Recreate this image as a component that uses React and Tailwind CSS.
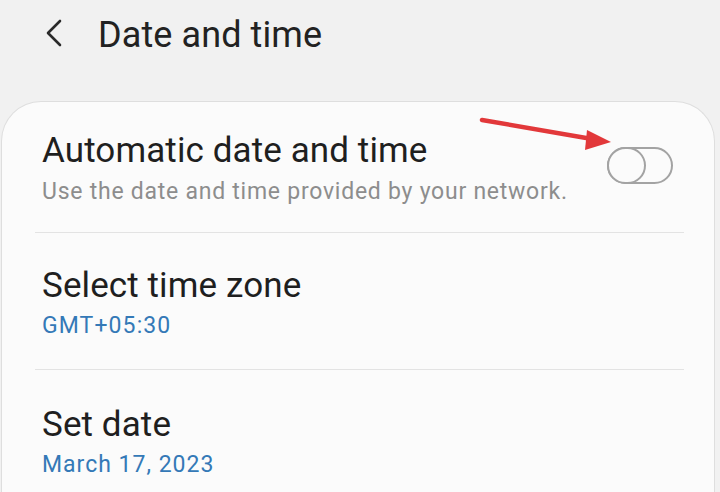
import React from 'react';

const Toggle = () => (
    <div className="relative w-[66px] h-[37px] rounded-full border-2 border-[#a3a3a3] bg-[#fbfbfb]">
        <div className="absolute -left-[2px] -top-[2px] w-[39px] h-[37px] rounded-full border-2 border-[#a3a3a3] bg-[#fbfbfb]" />
    </div>
);

const Row = ({ title, sub, subClass, pt, gap, pb, right, divider }) => (
    <div>
        <div className="flex items-center justify-between pl-[40px] pr-[41px]" style={{ paddingTop: pt, paddingBottom: pb }}>
            <div className="flex flex-col" style={{ gap }}>
                <div className="text-[35px] leading-[42px] text-[#1f1f1f] tracking-[0.1px]">{title}</div>
                <div className={`text-[23px] leading-[28px] ${subClass}`}>{sub}</div>
            </div>
            {right}
        </div>
        {divider && <div className="ml-[33px] mr-[30px] h-px bg-[#e3e3e3]" />}
    </div>
);

const App = () => {
    return (
        <div className="w-[720px] h-[492px] overflow-hidden bg-[#f1f1f1] relative" style={{ fontFamily: 'Roboto, "Liberation Sans", sans-serif' }}>
            <div className="h-[101px] flex items-start pt-[14px] pl-[44px]">
                <svg width="20" height="28" viewBox="0 0 20 28" className="mt-[5px]">
                    <path d="M16 2 L4 14 L16 26" fill="none" stroke="#2a2a2a" strokeWidth="2.6" strokeLinecap="round" strokeLinejoin="round" />
                </svg>
                <div className="ml-[34px] text-[36px] leading-[42px] text-[#222] tracking-[0.1px]">Date and time</div>
            </div>
            <div className="ml-px mr-[5px] h-[400px] bg-[#fbfbfb] rounded-t-[40px] border border-[#dedede] border-b-0">
                <Row
                    title="Automatic date and time"
                    sub="Use the date and time provided by your network."
                    subClass="text-[#8d8d8d] tracking-[0.75px]"
                    pt={28}
                    gap={6}
                    pb={26}
                    right={<div className="-mt-[6px]"><Toggle /></div>}
                    divider
                />
                <Row title="Select time zone" sub="GMT+05:30" subClass="text-[#3479b7] tracking-[1.1px]" pt={32} gap={5} pb={29} divider />
                <Row title="Set date" sub="March 17, 2023" subClass="text-[#3479b7] tracking-[1px]" pt={34} gap={5} pb={20} />
            </div>
            <svg className="absolute left-0 top-0 pointer-events-none" width="720" height="492">
                <line x1="482" y1="120" x2="592" y2="139" stroke="#e2383a" strokeWidth="4.5" strokeLinecap="round" />
                <polygon points="611,142 587,130 585,150" fill="#e2383a" />
            </svg>
        </div>
    );
};

export default App;
